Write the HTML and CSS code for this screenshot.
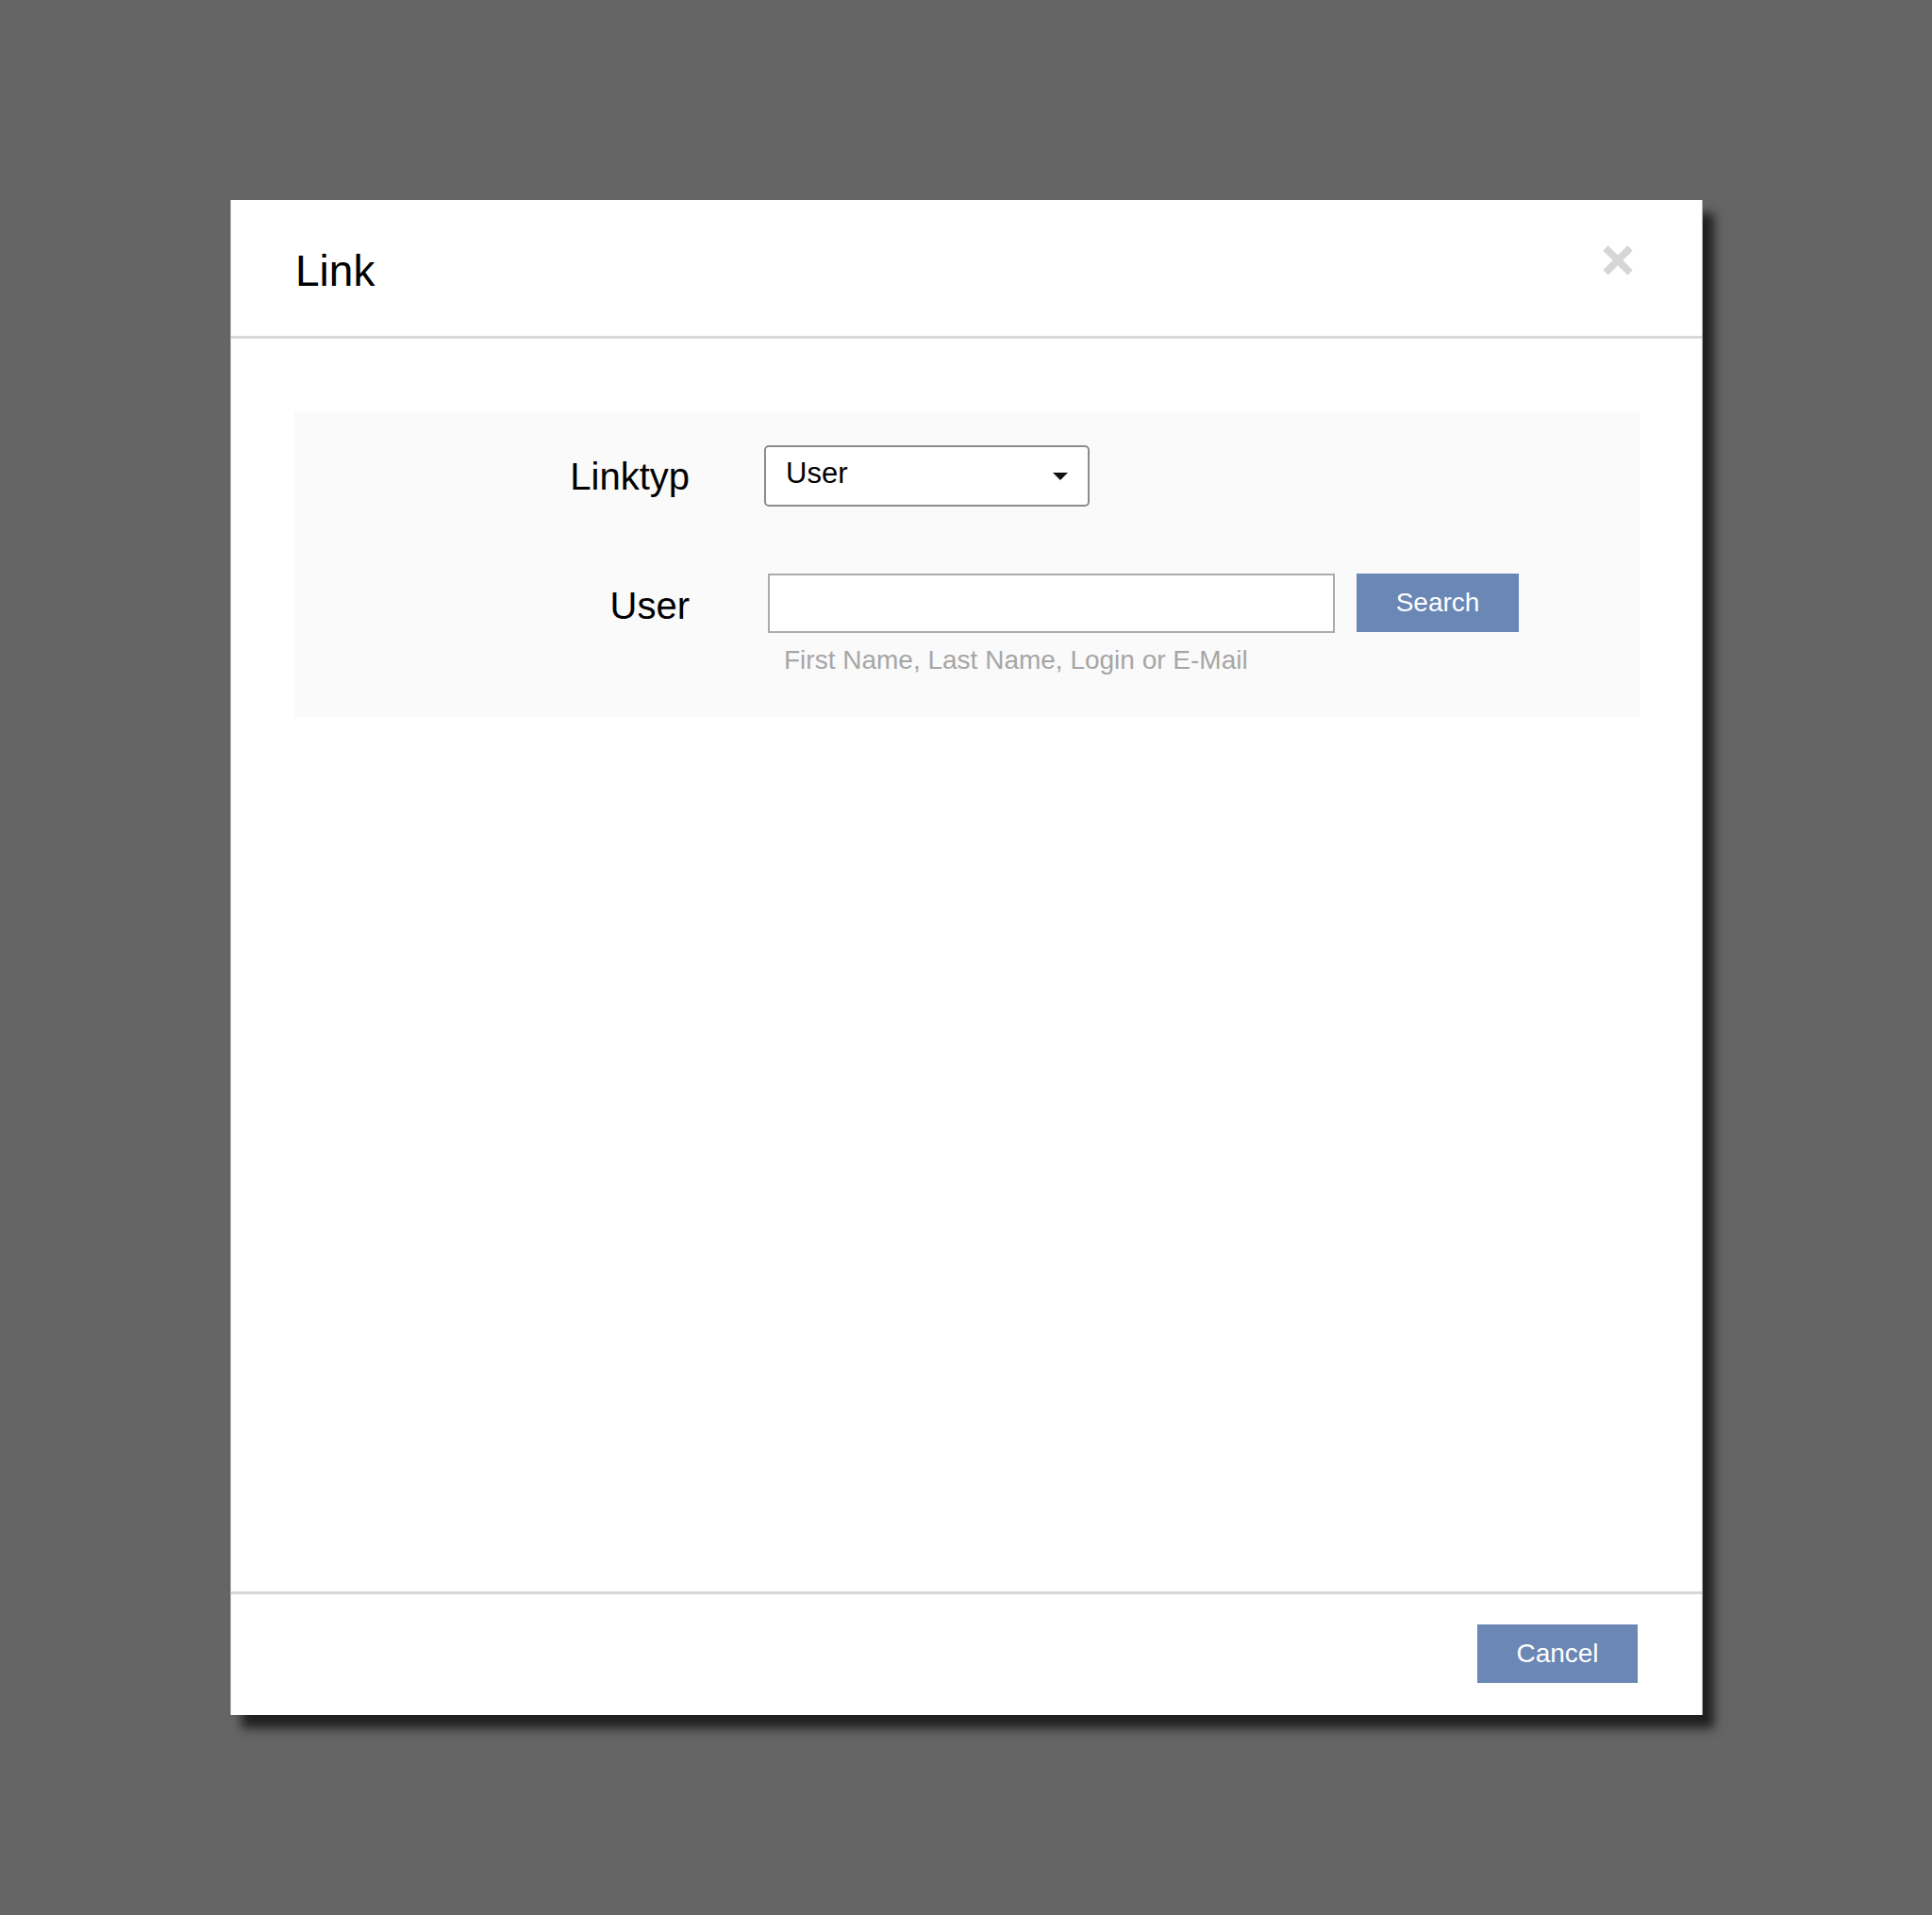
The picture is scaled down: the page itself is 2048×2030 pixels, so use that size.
FILE: index.html
```html
<!DOCTYPE html>
<html>
<head>
<meta charset="utf-8">
<link rel="stylesheet" href="styles.css">
</head>
<body>
<div class="page">
  <div class="dialog">
    <div class="header">
      <h1 class="title">Link</h1>
      <button class="close" aria-label="Close">
        <svg width="34" height="34" viewBox="0 0 34 34"><path d="M4 4 L30 30 M30 4 L4 30" stroke="#d6d6d6" stroke-width="7.5" fill="none"/></svg>
      </button>
    </div>
    <div class="body">
      <div class="panel">
        <div class="row">
          <div class="label">Linktyp</div>
          <div class="control">
            <div class="select">
              <span>User</span>
              <svg class="caret" width="16" height="8" viewBox="0 0 16 8"><path d="M0 0 L16 0 L8 8 Z" fill="#111"/></svg>
            </div>
          </div>
        </div>
        <div class="row row-user">
          <div class="label">User</div>
          <div class="control">
            <div class="search-line">
              <input class="input" type="text">
              <button class="btn">Search</button>
            </div>
            <div class="hint">First Name, Last Name, Login or E-Mail</div>
          </div>
        </div>
      </div>
    </div>
    <div class="footer">
      <button class="btn btn-cancel">Cancel</button>
    </div>
  </div>
</div>
</body>
</html>
```
FILE: styles.css
```css
html, body {
  margin: 0;
  padding: 0;
}
body {
  background: #656565;
  width: 2048px;
  height: 2030px;
  font-family: "Liberation Sans", Arial, sans-serif;
  color: #000;
}
.page {
  padding-top: 212px;
  padding-left: 244px;
}
.dialog {
  width: 1561px;
  height: 1606px;
  background: #fff;
  display: flex;
  flex-direction: column;
  box-shadow: 12px 14px 10px rgba(0, 0, 0, 0.68);
  border-left: 1px solid #b5b5b5;
  border-right: 1px solid #b5b5b5;
  box-sizing: border-box;
}
.header {
  height: 144px;
  border-bottom: 3px solid #d9d9d9;
  display: flex;
  justify-content: space-between;
  align-items: flex-start;
  padding: 0 72px 0 68px;
  flex: none;
}
.title {
  margin: 0;
  padding-top: 52px;
  font-size: 46px;
  line-height: 46px;
  font-weight: normal;
}
.close {
  margin-top: 47px;
  padding: 0;
  border: 0;
  background: transparent;
  width: 34px;
  height: 34px;
}
.close svg {
  display: block;
}
.body {
  flex: 1;
  padding: 77px 66px 0 67px;
}
.panel {
  background: #fafafa;
  padding: 36px 0 44px 0;
  display: flex;
  flex-direction: column;
  gap: 71px;
}
.row {
  display: grid;
  grid-template-columns: 419px 1fr;
  column-gap: 79px;
  align-items: center;
}
.row-user {
  align-items: start;
}
.label {
  text-align: right;
  font-size: 40px;
  line-height: 46px;
}
.row-user .label {
  padding-top: 11px;
}
.select {
  width: 345px;
  height: 65px;
  box-sizing: border-box;
  border: 2px solid #8c8c8c;
  border-radius: 5px;
  background: #fff;
  display: flex;
  align-items: center;
  justify-content: space-between;
  padding: 0 21px 0 21px;
  font-size: 31px;
}
.select span {
  margin-top: -6px;
}
.caret {
  display: block;
}
.search-line {
  display: flex;
  gap: 23px;
  margin-left: 4px;
}
.input {
  width: 601px;
  height: 63px;
  box-sizing: border-box;
  border: 2px solid #ababab;
  background: #fff;
  margin: 0;
  font-size: 28px;
  font-family: inherit;
}
.btn {
  width: 172px;
  height: 62px;
  border: 0;
  margin: 0;
  background: #6a87b6;
  color: #fff;
  font-family: "Liberation Sans", Arial, sans-serif;
  font-size: 28px;
  padding: 0;
}
.hint {
  margin-top: 13px;
  margin-left: 21px;
  font-size: 28px;
  line-height: 32px;
  color: #a6a6a6;
}
.footer {
  flex: none;
  height: 131px;
  box-sizing: border-box;
  border-top: 3px solid #d6d6d6;
  display: flex;
  justify-content: flex-end;
  align-items: flex-start;
  padding: 32px 68px 0 0;
}
.btn-cancel {
  width: 170px;
  height: 62px;
}
```
